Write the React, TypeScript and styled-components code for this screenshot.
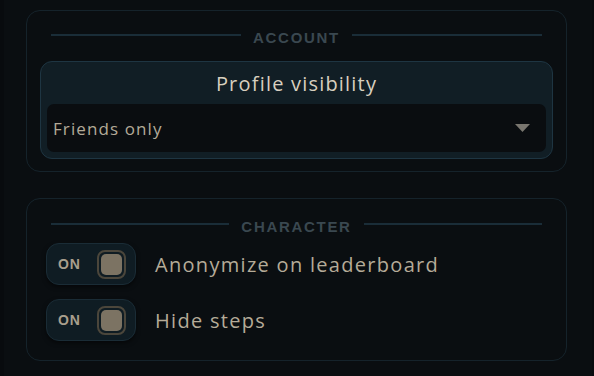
import React from "react";
import styled, { createGlobalStyle } from "styled-components";

const Global = createGlobalStyle`
  html, body { margin: 0; padding: 0; background: #080b0e; }
  body { font-family: "Open Sans", "DejaVu Sans", sans-serif; }
`;

const Page = styled.div`
  width: 588px;
  height: 376px;
  margin-left: 4px;
  box-sizing: border-box;
  background: #0a0e11;
  padding: 10px 25px 0 22px;
  display: flex;
  flex-direction: column;
  gap: 26px;
`;

const Card = styled.section<{ $top: number; $bottom: number }>`
  border: 1px solid #15232b;
  border-radius: 14px;
  padding: ${(p) => p.$top}px 13px ${(p) => p.$bottom}px 13px;
  display: flex;
  flex-direction: column;
`;

const Heading = styled.div<{ $gap: number }>`
  display: flex;
  align-items: center;
  gap: 12px;
  padding: 0 11px;
  height: 16px;
  margin-bottom: ${(p) => p.$gap}px;
`;

const Rule = styled.div`
  flex: 1;
  height: 2px;
  background: #1a2d38;
`;

const HeadingText = styled.span`
  font-family: "Liberation Sans", Arial, sans-serif;
  font-weight: 700;
  font-size: 15px;
  letter-spacing: 1.7px;
  color: #3a4850;
  position: relative;
  top: 2px;
`;

const Field = styled.div`
  background: #111e25;
  border: 1px solid #1e3542;
  border-radius: 12px;
  padding: 0 6px 6px;
  display: flex;
  flex-direction: column;
`;

const FieldTitle = styled.div`
  height: 42px;
  display: flex;
  align-items: center;
  justify-content: center;
  font-size: 20px;
  letter-spacing: 1.2px;
  color: #d8cfbf;
`;

const Select = styled.div`
  height: 48px;
  background: #0a0d10;
  border-radius: 7px;
  display: flex;
  align-items: center;
  justify-content: space-between;
  padding: 0 16px 0 6px;
  font-size: 17px;
  letter-spacing: 1.1px;
  color: #b3aa98;
`;

const Rows = styled.div`
  display: flex;
  flex-direction: column;
  gap: 14px;
  padding: 0 6px;
`;

const Row = styled.div`
  display: flex;
  align-items: center;
  gap: 19px;
`;

const Toggle = styled.div`
  width: 90px;
  height: 42px;
  box-sizing: border-box;
  border: 1px solid #1a2c36;
  background: #0f1c23;
  border-radius: 13px;
  display: flex;
  align-items: center;
  justify-content: space-between;
  padding: 0 9px 0 11px;
  box-shadow: 0 2px 4px rgba(0, 0, 0, 0.5);
`;

const ToggleText = styled.span`
  font-family: "Liberation Sans", Arial, sans-serif;
  font-weight: 700;
  font-size: 14px;
  letter-spacing: 0.8px;
  color: #a89f8c;
`;

const Knob = styled.span`
  width: 29px;
  height: 29px;
  box-sizing: border-box;
  border: 2px solid #4b463b;
  border-radius: 8px;
  padding: 2px;
  display: flex;
  &::after {
    content: "";
    flex: 1;
    background: #7c7363;
    border-radius: 5px;
  }
`;

const Label = styled.span`
  font-size: 20px;
  letter-spacing: 1.3px;
  color: #b5ab98;
`;

const Arrow = () => (
  <svg width="15" height="8" viewBox="0 0 15 8">
    <path d="M0 0 H15 L7.5 8 Z" fill="#79766f" />
  </svg>
);

export default function App() {
  return (
    <>
      <Global />
      <Page>
        <Card $top={16} $bottom={12}>
          <Heading $gap={18}>
            <Rule />
            <HeadingText>ACCOUNT</HeadingText>
            <Rule />
          </Heading>
          <Field>
            <FieldTitle>Profile visibility</FieldTitle>
            <Select>
              <span>Friends only</span>
              <Arrow />
            </Select>
          </Field>
        </Card>
        <Card $top={17} $bottom={19}>
          <Heading $gap={11}>
            <Rule />
            <HeadingText>CHARACTER</HeadingText>
            <Rule />
          </Heading>
          <Rows>
            <Row>
              <Toggle>
                <ToggleText>ON</ToggleText>
                <Knob />
              </Toggle>
              <Label>Anonymize on leaderboard</Label>
            </Row>
            <Row>
              <Toggle>
                <ToggleText>ON</ToggleText>
                <Knob />
              </Toggle>
              <Label>Hide steps</Label>
            </Row>
          </Rows>
        </Card>
      </Page>
    </>
  );
}
